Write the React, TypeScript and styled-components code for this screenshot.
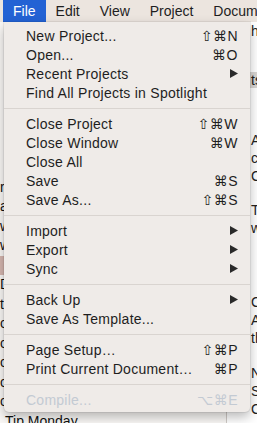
import React from 'react'
import styled, { createGlobalStyle } from 'styled-components'

const GlobalStyle = createGlobalStyle`
  html, body {
    margin: 0;
    padding: 0;
    background: #f6f3f0;
  }
  body {
    font-family: 'Liberation Sans', Arial, sans-serif;
    -webkit-font-smoothing: antialiased;
  }
`

const Screen = styled.div`
  position: relative;
  width: 257px;
  height: 423px;
  overflow: hidden;
  background: #f6f3f0;
`

const MenuBar = styled.div`
  display: flex;
  align-items: stretch;
  height: 22px;
  padding-left: 3px;
  background: #ece5df;
  font-size: 14px;
  color: #1e1e1e;
`

const MenuTitle = styled.div<{ $active?: boolean }>`
  display: flex;
  align-items: center;
  padding: 0 10px;
  white-space: nowrap;
  background: ${(p) => (p.$active ? '#2362d4' : 'transparent')};
  color: ${(p) => (p.$active ? '#ffffff' : '#1e1e1e')};
`

const Workspace = styled.div`
  display: flex;
  height: 401px;
`

const Outline = styled.div`
  width: 226px;
  flex-shrink: 0;
  border-right: 1px solid #cfcac6;
  padding-top: 136px;
  background: #faf8f6;
`

const OutlineRow = styled.div<{ $indent: number; $selected?: boolean }>`
  height: 19.5px;
  line-height: 19.5px;
  padding-left: ${(p) => p.$indent}px;
  font-size: 14px;
  color: #111;
  white-space: nowrap;
  background: ${(p) => (p.$selected ? '#d6b7b0' : 'transparent')};
`

const Doc = styled.div`
  flex: 1;
  padding-left: 24px;
  background: #ffffff;
`

const DocLine = styled.div<{ $band?: boolean }>`
  height: ${(p) => (p.$band ? 16 : 18)}px;
  line-height: ${(p) => (p.$band ? 16 : 18)}px;
  font-size: 14px;
  color: #222;
  white-space: nowrap;
  margin-left: ${(p) => (p.$band ? -24 : 0)}px;
  padding-left: ${(p) => (p.$band ? 24 : 0)}px;
  background: ${(p) => (p.$band ? '#d9d6d3' : 'transparent')};
`

const DocGap = styled.div<{ $h: number }>`
  height: ${(p) => p.$h}px;
`

const Dropdown = styled.div`
  position: absolute;
  top: 22px;
  left: 4px;
  width: 246px;
  padding: 4px 0 3px;
  background: #efebe8;
  border-radius: 0 0 5px 5px;
  box-shadow: 0 5px 12px rgba(0, 0, 0, 0.28), 0 0 0 1px rgba(0, 0, 0, 0.06);
  font-size: 14px;
`

const Item = styled.div<{ $disabled?: boolean }>`
  display: flex;
  align-items: center;
  height: 19px;
  padding: 0 12px 0 22px;
  color: ${(p) => (p.$disabled ? '#c3cad3' : '#1e1e1e')};
  white-space: nowrap;
`

const Label = styled.span`
  flex: 1;
  letter-spacing: 0.25px;
`

const Shortcut = styled.span`
  font-family: 'Liberation Sans', 'DejaVu Sans', sans-serif;
  letter-spacing: 0.5px;
`

const Separator = styled.div`
  height: 1px;
  margin: 6px 0 5px;
  background: #d9d4d0;
`

const Arrow = () => (
  <svg width="8" height="9" viewBox="0 0 8 9">
    <polygon points="0,0 8,4.5 0,9" fill="#2a2a2a" />
  </svg>
)

type Entry = { label: string; shortcut?: string; submenu?: boolean; disabled?: boolean }

const sections: Entry[][] = [
  [
    { label: 'New Project...', shortcut: '⇧⌘N' },
    { label: 'Open...', shortcut: '⌘O' },
    { label: 'Recent Projects', submenu: true },
    { label: 'Find All Projects in Spotlight' },
  ],
  [
    { label: 'Close Project', shortcut: '⇧⌘W' },
    { label: 'Close Window', shortcut: '⌘W' },
    { label: 'Close All' },
    { label: 'Save', shortcut: '⌘S' },
    { label: 'Save As...', shortcut: '⇧⌘S' },
  ],
  [
    { label: 'Import', submenu: true },
    { label: 'Export', submenu: true },
    { label: 'Sync', submenu: true },
  ],
  [
    { label: 'Back Up', submenu: true },
    { label: 'Save As Template...' },
  ],
  [
    { label: 'Page Setup…', shortcut: '⇧⌘P' },
    { label: 'Print Current Document…', shortcut: '⌘P' },
  ],
  [{ label: 'Compile...', shortcut: '⌥⌘E', disabled: true }],
]

// document column behind the menu: text lines and gaps between them
type DocPart = { text?: string; gap?: number; band?: boolean }
const docParts: DocPart[] = [
  { text: 'he' },
  { gap: 32 },
  { text: 'ts', band: true },
  { gap: 43 },
  { text: 'A' },
  { text: 'co' },
  { text: 'Ch' },
  { gap: 16 },
  { text: 'Th' },
  { text: 'wi' },
  { gap: 56 },
  { text: 'Ch' },
  { text: 'Ab' },
  { text: 'th' },
  { gap: 17 },
  { text: 'No' },
  { text: 'Sc' },
  { text: 'Ch' },
]

const outlineRows = ['', 'r', 'a', 'w', 'w', '', 'D', 't', 'c', 'c', 'c', 'c', 'c']

export default function App() {
  return (
    <Screen>
      <GlobalStyle />
      <MenuBar>
        <MenuTitle $active>File</MenuTitle>
        <MenuTitle>Edit</MenuTitle>
        <MenuTitle>View</MenuTitle>
        <MenuTitle>Project</MenuTitle>
        <MenuTitle>Documents</MenuTitle>
      </MenuBar>
      <Workspace>
        <Outline>
          {outlineRows.map((r, i) => (
            <OutlineRow key={i} $indent={0} $selected={i === 5}>
              {r}
            </OutlineRow>
          ))}
          <OutlineRow $indent={5}>Tip Monday</OutlineRow>
        </Outline>
        <Doc>
          {docParts.map((part, i) =>
            part.gap ? (
              <DocGap key={i} $h={part.gap} />
            ) : (
              <DocLine key={i} $band={part.band}>
                {part.text}
              </DocLine>
            )
          )}
        </Doc>
      </Workspace>
      <Dropdown>
        {sections.map((section, si) => (
          <React.Fragment key={si}>
            {si > 0 && <Separator />}
            {section.map((e) => (
              <Item key={e.label} $disabled={e.disabled}>
                <Label>{e.label}</Label>
                {e.shortcut && <Shortcut>{e.shortcut}</Shortcut>}
                {e.submenu && <Arrow />}
              </Item>
            ))}
          </React.Fragment>
        ))}
      </Dropdown>
    </Screen>
  )
}
